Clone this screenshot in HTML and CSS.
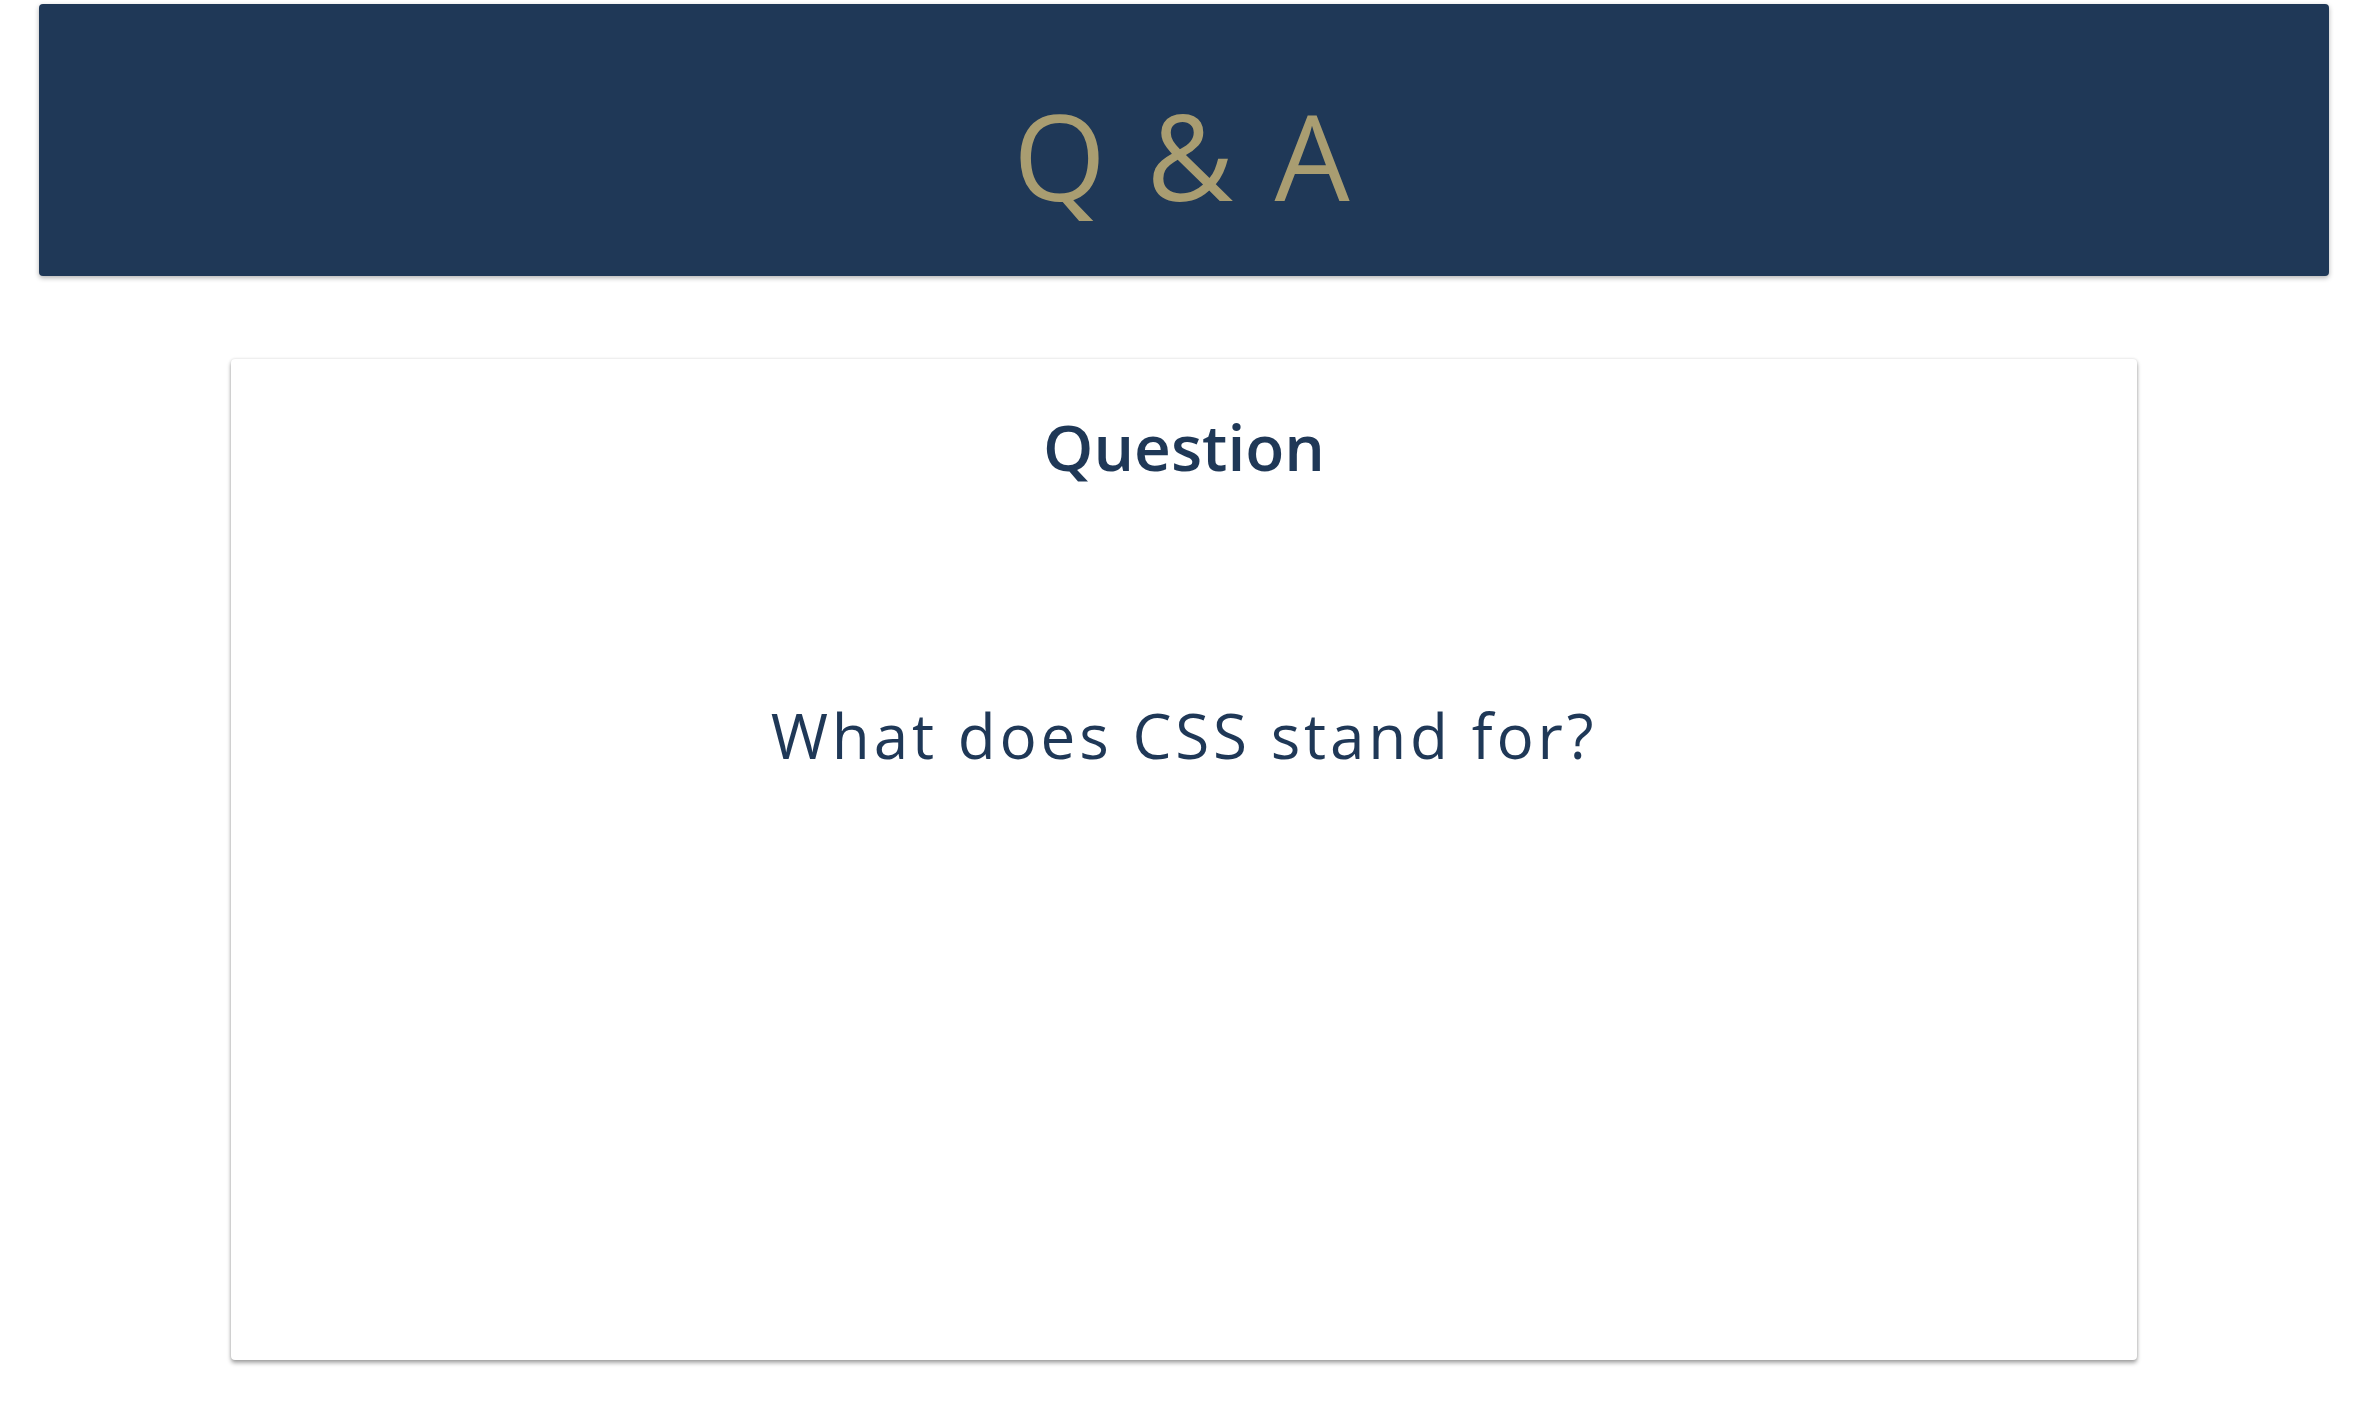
FILE: index.html
```html
<!DOCTYPE html>
<html lang="en">
<head>
<meta charset="utf-8">
<title>Q &amp; A</title>
<link rel="stylesheet" href="styles.css">
</head>
<body>
<header class="banner">
  <h1 class="banner-title">Q &amp; A</h1>
</header>
<main class="content">
  <section class="card">
    <h2 class="card-label">Question</h2>
    <p class="card-text">What does CSS stand for?</p>
  </section>
</main>
</body>
</html>
```
FILE: styles.css
```css
* { box-sizing: border-box; }
html, body {
  min-height: 100%;
}
body {
  margin: 0;
  background: #ffffff;
  font-family: "Open Sans", "Noto Sans", sans-serif;
  color: #1f3857;
}
.banner {
  width: 2290px;
  height: 272px;
  margin: 4px auto 0;
  background: #1f3857;
  border-radius: 4px;
  box-shadow: 0 2px 5px rgba(0,0,0,0.3);
  display: flex;
  justify-content: center;
  align-items: center;
}
.banner-title {
  margin: 30px 0 0;
  font-size: 119px;
  font-weight: 400;
  color: #a99d71;
  letter-spacing: 5px;
  line-height: 1;
}
.content {
  display: flex;
  justify-content: center;
  padding: 83px 0 40px;
}
.card {
  width: 1906px;
  height: 1001px;
  background: #ffffff;
  border-radius: 4px;
  box-shadow: 0 0 3px rgba(0,0,0,0.14), 0 3px 4px rgba(0,0,0,0.35);
  display: flex;
  flex-direction: column;
  align-items: center;
}
.card-label {
  margin: 50px 0 0;
  font-size: 64px;
  font-weight: 600;
  line-height: 1.2;
}
.card-text {
  margin: 212px 0 0;
  font-size: 62px;
  font-weight: 400;
  line-height: 1.2;
  letter-spacing: 3.8px;
}
```
